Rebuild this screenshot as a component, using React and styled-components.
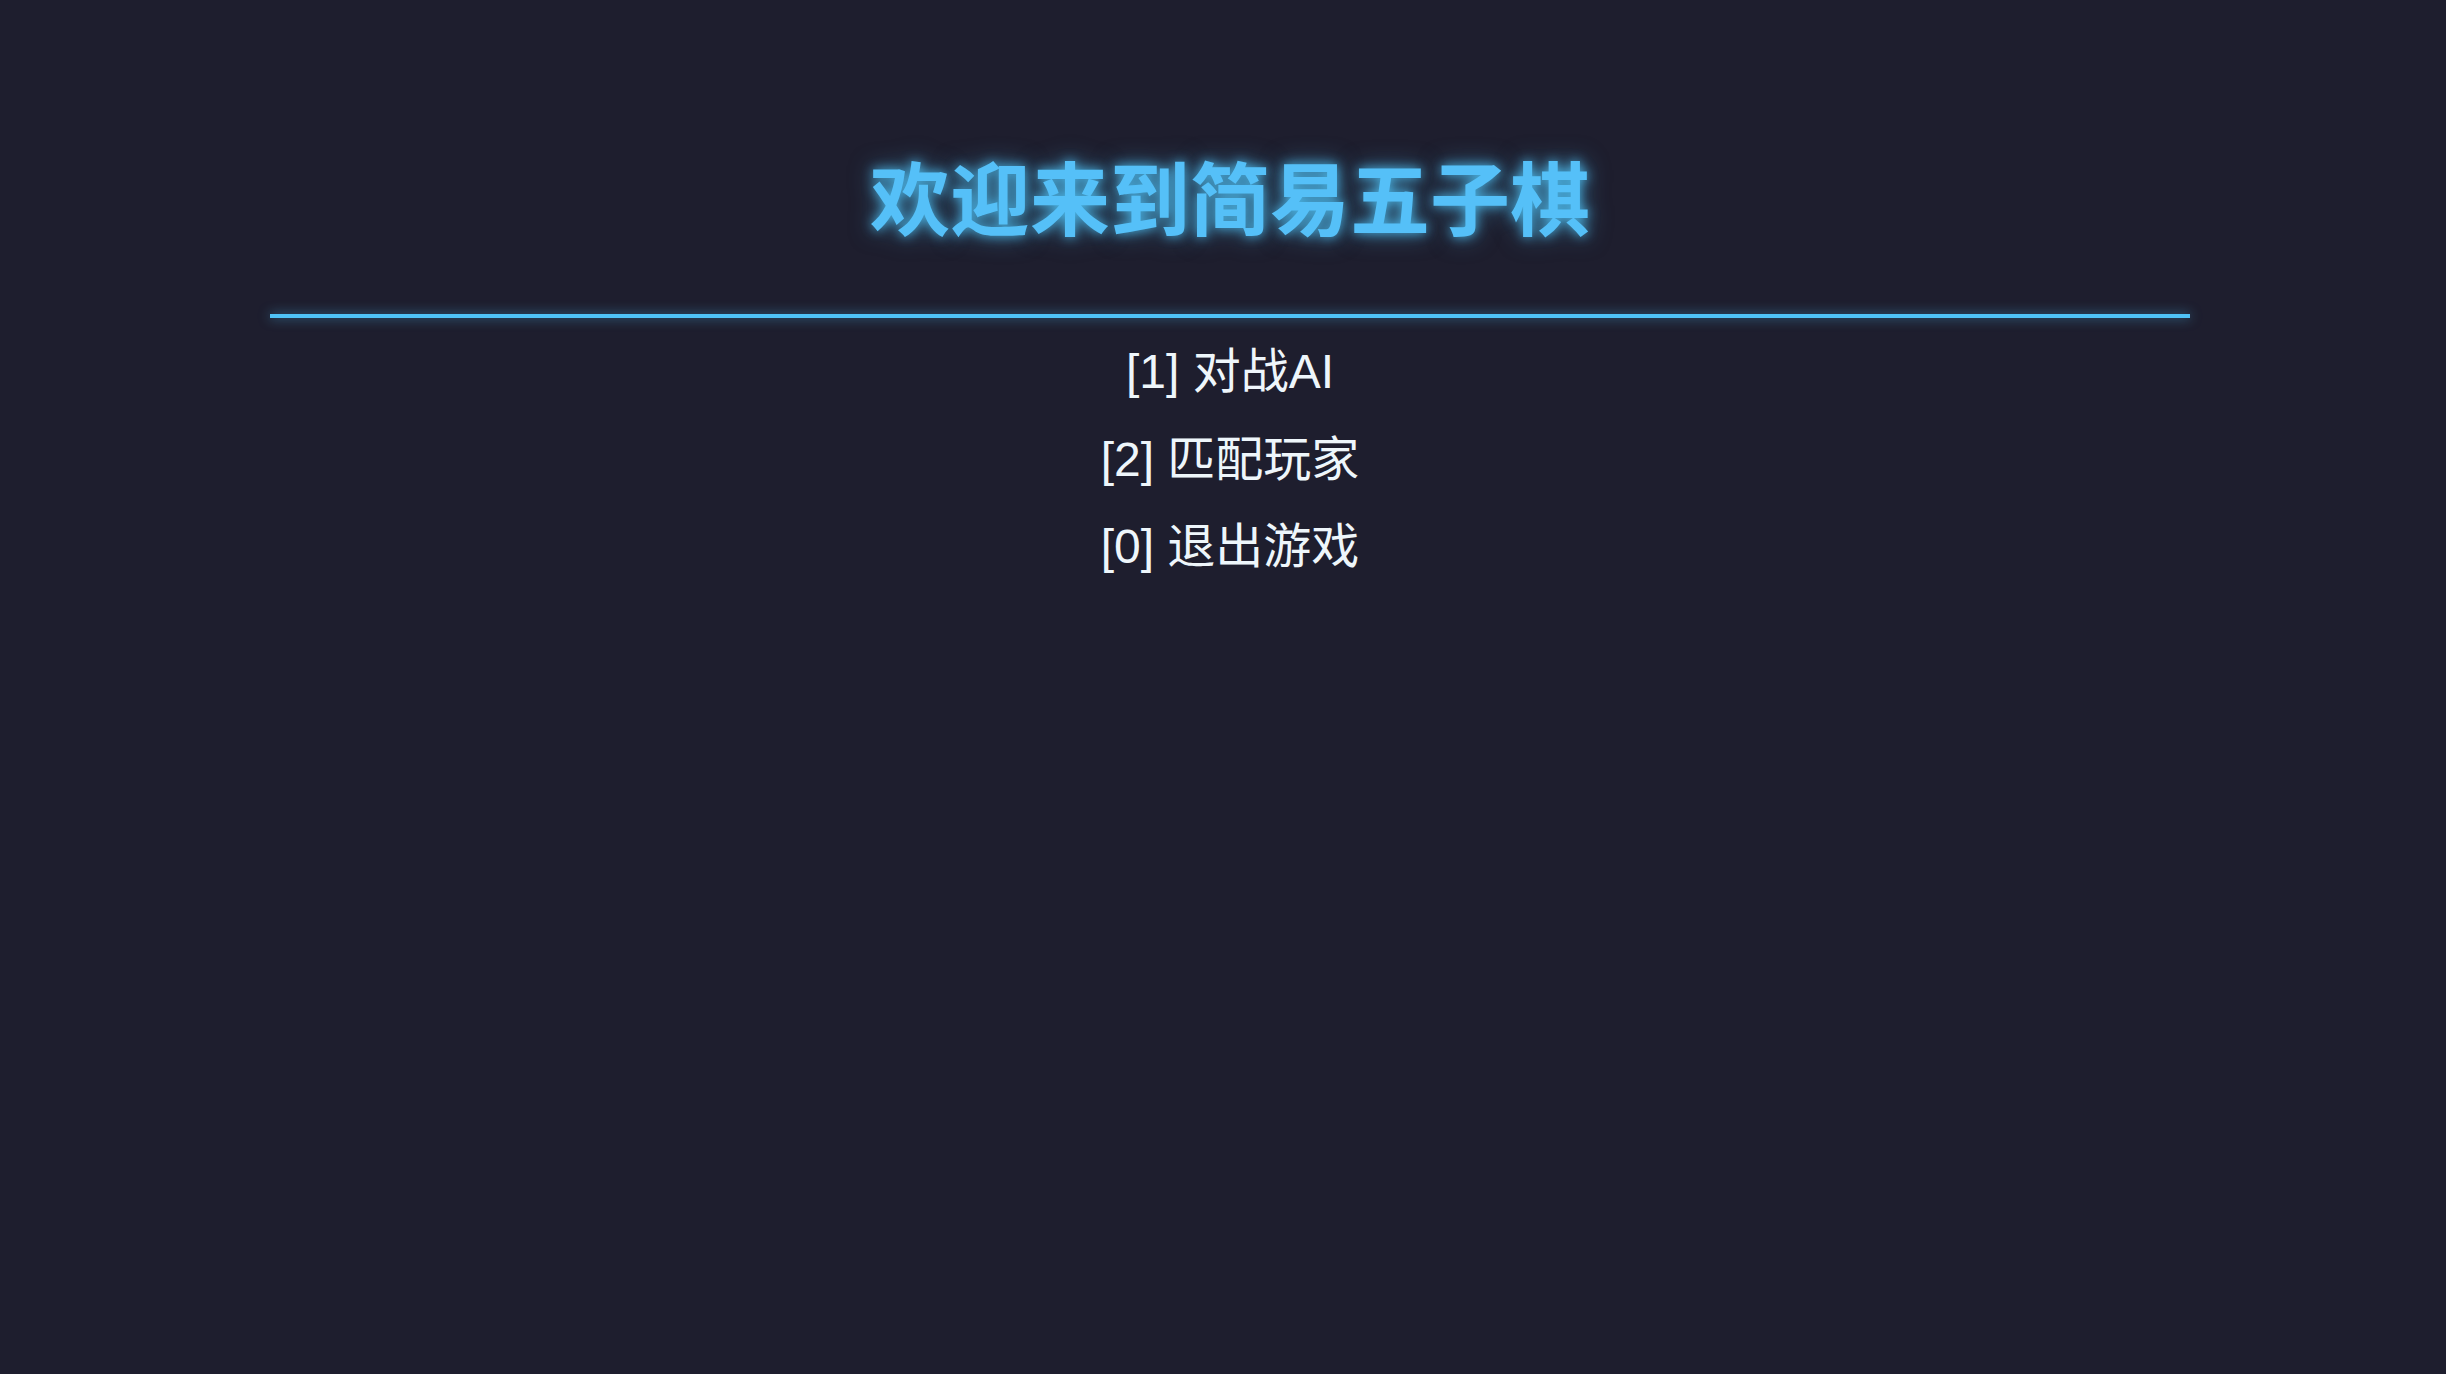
import React from 'react';
import styled, {createGlobalStyle} from 'styled-components';

const GlobalStyle = createGlobalStyle`
    html, body {
        margin: 0;
        padding: 0;
        background-color: #1e1e2e;
    }
    body {
        min-height: 1374px;
        font-family: "Liberation Sans", "Noto Sans CJK SC", sans-serif;
    }
`;

const Page = styled.div`
    display: flex;
    flex-direction: column;
    align-items: stretch;
    padding: 146px 256px 0 270px;
`;

const Title = styled.h1`
    margin: 0;
    text-align: center;
    font-family: "Noto Sans CJK SC", sans-serif;
    font-size: 80px;
    font-weight: 700;
    line-height: 96px;
    color: #55c0f8;
    text-shadow: 0 0 12px rgba(79, 195, 247, 0.9), 0 0 24px rgba(79, 195, 247, 0.5);
`;

const Divider = styled.div`
    height: 4px;
    margin: 72px 0 10px;
    background-color: #4fc3f7;
    box-shadow: 0 0 12px rgba(79, 195, 247, 0.6);
`;

const Menu = styled.ul`
    list-style: none;
    margin: 0;
    padding: 0;
    display: flex;
    flex-direction: column;
    align-items: center;
`;

const MenuItem = styled.li`
    font-size: 48px;
    line-height: 87.5px;
    color: #eef6fb;
`;

const items = [
    {key: '1', label: '对战AI'},
    {key: '2', label: '匹配玩家'},
    {key: '0', label: '退出游戏'}
];

export default function App() {
    return (
        <>
            <GlobalStyle/>
            <Page>
                <Title>欢迎来到简易五子棋</Title>
                <Divider/>
                <Menu>
                    {items.map((item) => (
                        <MenuItem key={item.key}>[{item.key}] {item.label}</MenuItem>
                    ))}
                </Menu>
            </Page>
        </>
    );
}
